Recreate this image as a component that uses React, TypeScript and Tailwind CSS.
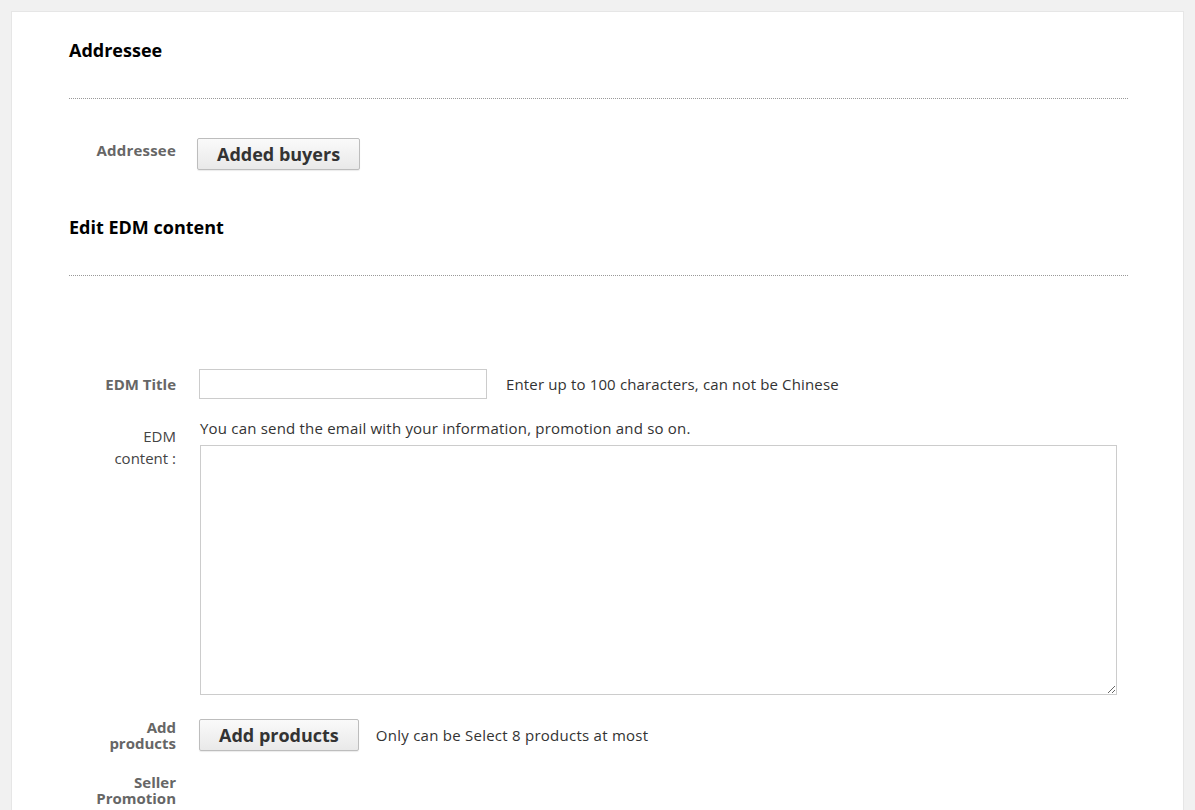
import React from "react";

/* ── Small building blocks ───────────────────────────────────────────── */
function SectionTitle({ children, className = "" }: { children: React.ReactNode; className?: string }) {
  return (
    <div className={`border-b border-dotted border-[#999] pb-[37px] pt-[27px] ${className}`}>
      <h2 className="text-[18px] font-bold leading-[22px] text-black">{children}</h2>
    </div>
  );
}

function GrayButton({ children }: { children: React.ReactNode }) {
  return (
    <button
      type="button"
      className="h-[32px] rounded-[2px] border border-[#bdbdbd] bg-gradient-to-b from-[#fafafa] to-[#e9e9e9] px-[19px] text-[18px] font-bold leading-[30px] text-[#333] shadow-[0_1px_1px_rgba(0,0,0,0.08)]"
    >
      {children}
    </button>
  );
}

export default function App() {
  return (
    <div
      className="min-h-[810px] bg-[#f1f1f1] px-[11px] pt-[11px]"
      style={{ fontFamily: '"Open Sans", "Noto Sans", Arial, sans-serif' }}
    >
      <div className="min-h-[799px] border border-b-0 border-[#e6e6e6] bg-white pl-[57px] pr-[55px]">
        {/* Addressee */}
        <SectionTitle>Addressee</SectionTitle>
        <div className="flex items-start pt-[39px]">
          <div className="w-[107px] shrink-0 pt-[3px] text-right text-[15px] font-bold leading-[18px] tracking-[0.2px] text-[#666]">
            Addressee
          </div>
          <div className="ml-[21px]">
            <GrayButton>Added buyers</GrayButton>
          </div>
        </div>

        {/* Edit EDM content */}
        <SectionTitle className="mt-[19px]">Edit EDM content</SectionTitle>

        <div className="pt-[93px]">
          <div className="flex items-center">
            <div className="w-[107px] shrink-0 text-right text-[15px] font-bold leading-[18px] text-[#666]">
              EDM Title
            </div>
            <div className="ml-[23px] flex items-center">
              <input
                type="text"
                className="h-[30px] w-[288px] border border-[#cccccc] bg-white px-2 text-[15px] outline-none"
              />
              <span className="ml-[19px] text-[15px] tracking-[0.15px] text-[#333]">
                Enter up to 100 characters, can not be Chinese
              </span>
            </div>
          </div>

          <div className="mt-[19px] flex items-start">
            <div className="w-[107px] shrink-0 pt-[7px] text-right text-[15px] leading-[22px] text-[#444]">
              EDM
              <br />
              content :
            </div>
            <div className="ml-[24px] flex-1">
              <p className="text-[15px] leading-[20px] tracking-[0.2px] text-[#333]">
                You can send the email with your information, promotion and so on.
              </p>
              <textarea className="mt-[7px] block h-[250px] w-[917px] resize border border-[#cccccc] bg-white outline-none" />
            </div>
          </div>

          <div className="mt-[24px] flex items-start">
            <div className="w-[107px] shrink-0 text-right text-[15px] font-bold leading-[16px] text-[#666]">
              Add
              <br />
              products
            </div>
            <div className="ml-[23px] flex items-center">
              <GrayButton>Add products</GrayButton>
              <span className="ml-[17px] text-[15px] tracking-[0.25px] text-[#333]">
                Only can be Select 8 products at most
              </span>
            </div>
          </div>

          <div className="mt-[23px] flex items-start">
            <div className="w-[107px] shrink-0 text-right text-[15px] font-bold leading-[16px] text-[#666]">
              Seller
              <br />
              Promotion
            </div>
          </div>
        </div>
      </div>
    </div>
  );
}
